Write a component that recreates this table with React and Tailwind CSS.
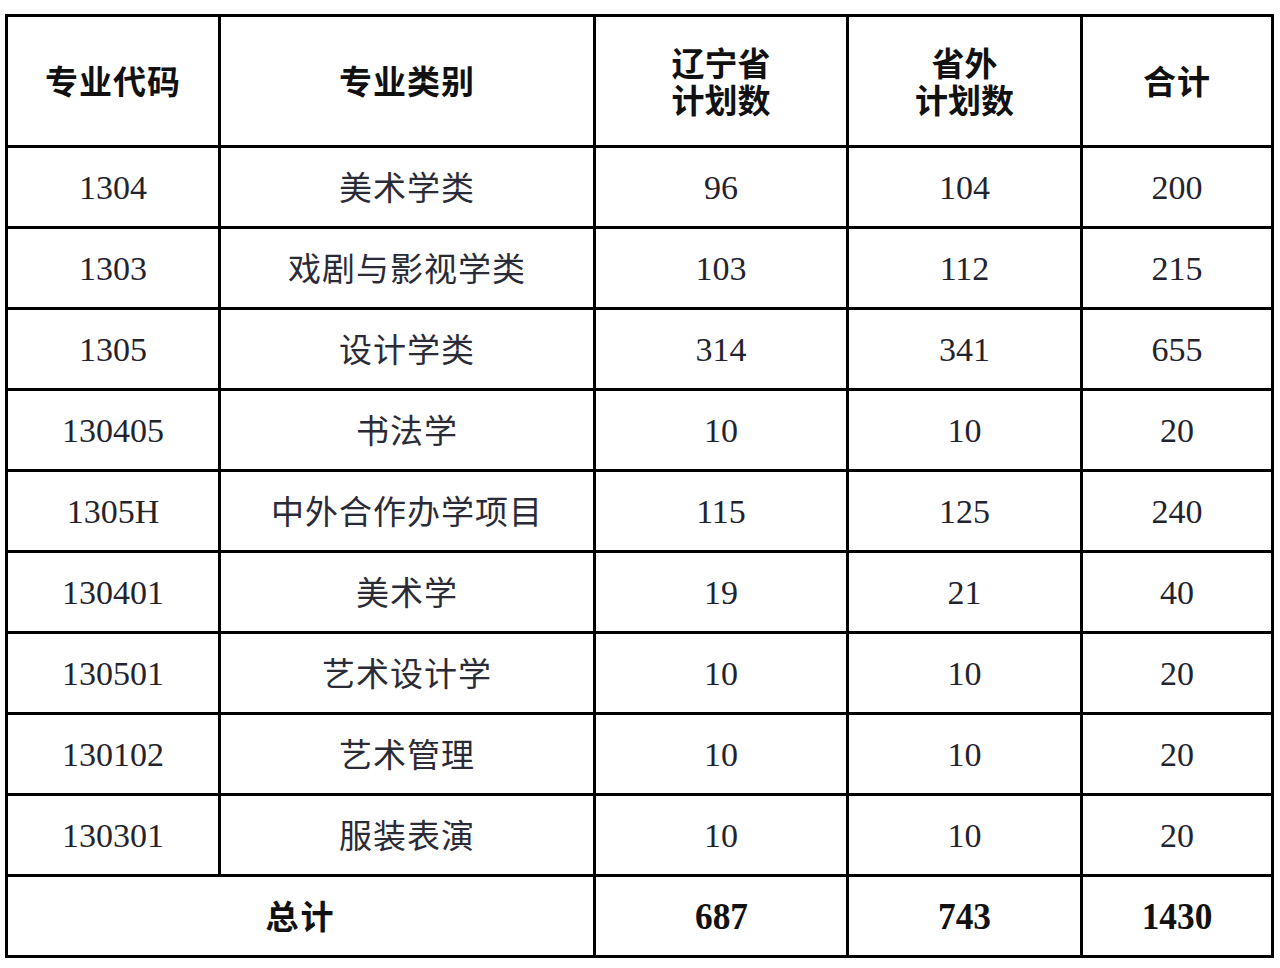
import React from "react";

const rows = [
    { code: "1304", name: "美术学类", ln: "96", out: "104", total: "200" },
    { code: "1303", name: "戏剧与影视学类", ln: "103", out: "112", total: "215" },
    { code: "1305", name: "设计学类", ln: "314", out: "341", total: "655" },
    { code: "130405", name: "书法学", ln: "10", out: "10", total: "20" },
    { code: "1305H", name: "中外合作办学项目", ln: "115", out: "125", total: "240" },
    { code: "130401", name: "美术学", ln: "19", out: "21", total: "40" },
    { code: "130501", name: "艺术设计学", ln: "10", out: "10", total: "20" },
    { code: "130102", name: "艺术管理", ln: "10", out: "10", total: "20" },
    { code: "130301", name: "服装表演", ln: "10", out: "10", total: "20" },
];

const cjk = "font-['Noto_Sans_CJK_SC',sans-serif]";
const num = "font-['Liberation_Serif','Noto_Sans_CJK_SC',serif]";

function Cell({ children, className = "" }) {
    return (
        <div className={"bg-white flex items-center justify-center text-center " + className}>
            {children}
        </div>
    );
}

export default function App() {
    return (
        <div className="min-h-screen bg-white pt-[14px] pl-[5px]">
            <div className="w-[1269px] grid grid-cols-[210px_372px_250px_231px_188px] grid-rows-[128px_repeat(10,78px)] gap-[3px] p-[3px] bg-black">
                {/* header */}
                <Cell className={cjk + " font-bold text-[33px] tracking-[1px] text-[#111]"}>专业代码</Cell>
                <Cell className={cjk + " font-bold text-[33px] tracking-[1px] text-[#111]"}>专业类别</Cell>
                <Cell className={cjk + " font-bold text-[33px] leading-[37px] text-[#111]"}>
                    <div>辽宁省<br />计划数</div>
                </Cell>
                <Cell className={cjk + " font-bold text-[33px] leading-[37px] text-[#111]"}>
                    <div>省外<br />计划数</div>
                </Cell>
                <Cell className={cjk + " font-bold text-[33px] tracking-[1px] text-[#111]"}>合计</Cell>

                {rows.map((r) => (
                    <React.Fragment key={r.code}>
                        <Cell className={num + " text-[34px] text-[#23232f]"}>{r.code}</Cell>
                        <Cell className={cjk + " text-[33px] tracking-[1px] text-[#2b2b38]"}>{r.name}</Cell>
                        <Cell className={num + " text-[34px] text-[#23232f]"}>{r.ln}</Cell>
                        <Cell className={num + " text-[34px] text-[#23232f]"}>{r.out}</Cell>
                        <Cell className={num + " text-[34px] text-[#23232f]"}>{r.total}</Cell>
                    </React.Fragment>
                ))}

                {/* total row */}
                <Cell className={"col-span-2 " + cjk + " font-bold text-[33px] tracking-[2px] text-[#111]"}>总计</Cell>
                <Cell className={num + " font-bold text-[38px] text-[#111]"}>
                    <span className="inline-block scale-x-[0.93]">687</span>
                </Cell>
                <Cell className={num + " font-bold text-[38px] text-[#111]"}>
                    <span className="inline-block scale-x-[0.93]">743</span>
                </Cell>
                <Cell className={num + " font-bold text-[38px] text-[#111]"}>
                    <span className="inline-block scale-x-[0.93]">1430</span>
                </Cell>
            </div>
        </div>
    );
}
